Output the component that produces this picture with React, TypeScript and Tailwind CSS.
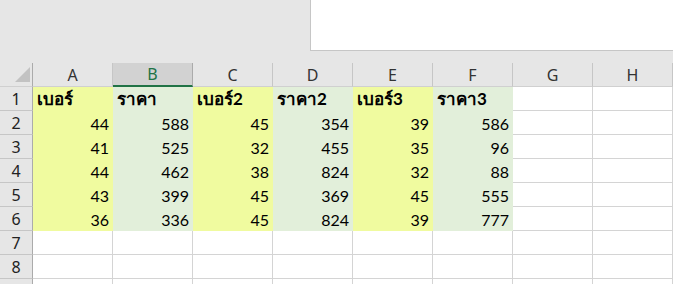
import React from 'react'

const COLS = ['A', 'B', 'C', 'D', 'E', 'F', 'G', 'H']

const ROWS: (string | number)[][] = [
  ['เบอร์', 'ราคา', 'เบอร์2', 'ราคา2', 'เบอร์3', 'ราคา3'],
  [44, 588, 45, 354, 39, 586],
  [41, 525, 32, 455, 35, 96],
  [44, 462, 38, 824, 32, 88],
  [43, 399, 45, 369, 45, 555],
  [36, 336, 45, 824, 39, 777],
]

const cellFont = { fontFamily: '"Lato", "Noto Sans", "DejaVu Sans", sans-serif' }
const uiFont = { fontFamily: '"Noto Sans", "Open Sans", sans-serif' }

function ColHeader({ label }: { label: string }) {
  const selected = label === 'B'
  return (
    <div
      className={
        selected
          ? 'h-[24px] bg-[#d2d2d2] border-r border-[#ababab] border-b-2 border-b-[#217346] flex items-center justify-center text-[16px] text-[#217346]'
          : 'h-[24px] bg-[#e6e6e6] border-r border-[#c6c6c6] border-b border-b-[#d0d0d0] flex items-center justify-center text-[16px] text-[#333]'
      }
      style={uiFont}
    >
      {label}
    </div>
  )
}

function RowHeader({ n }: { n?: number }) {
  return (
    <div
      className="h-[24px] bg-[#e6e6e6] border-r border-[#ababab] border-b border-b-[#c6c6c6] flex items-center justify-center text-[16px] text-[#222]"
      style={uiFont}
    >
      {n}
    </div>
  )
}

function Cell({ value, col }: { value?: string | number; col: number }) {
  if (value === undefined) {
    return <div className="h-[24px] bg-white border-r border-b border-[#d4d4d4]" />
  }
  const fill = col % 2 === 0 ? 'bg-[#f0fb9f]' : 'bg-[#e2efda]'
  const isText = typeof value === 'string'
  return (
    <div
      className={`h-[24px] ${fill} flex items-end text-black leading-none ${
        isText ? 'justify-start pl-[4px] pb-[4px] font-bold text-[17px]' : 'justify-end pr-[4px] pb-[3px] text-[16px]'
      }`}
      style={cellFont}
    >
      {value}
    </div>
  )
}

export default function App() {
  return (
    <div className="w-[673px] h-[284px] overflow-hidden bg-[#e6e6e6] select-none">
      {/* top area */}
      <div className="h-[63px] flex">
        <div className="w-[310px]" />
        <div className="flex-1 h-[51px] bg-white border-l border-b border-[#c6c6c6]" />
      </div>

      {/* sheet grid */}
      <div className="grid grid-cols-[33px_repeat(8,80px)]">
        <div className="h-[24px] bg-[#e6e6e6] border-r border-[#ababab] border-b border-b-[#d0d0d0] relative">
          <svg className="absolute left-[15px] top-[4px]" width="16" height="16" viewBox="0 0 16 16">
            <polygon points="15,0 15,15 0,15" fill="#c2c2c2" />
          </svg>
        </div>
        {COLS.map((c) => (
          <ColHeader key={c} label={c} />
        ))}

        {Array.from({ length: 9 }).map((_, r) => (
          <React.Fragment key={r}>
            {/* row 9 falls below the window, its number is not visible */}
            <RowHeader n={r < 8 ? r + 1 : undefined} />
            {COLS.map((c, ci) => (
              <Cell key={c} col={ci} value={ROWS[r] ? ROWS[r][ci] : undefined} />
            ))}
          </React.Fragment>
        ))}
      </div>
    </div>
  )
}
